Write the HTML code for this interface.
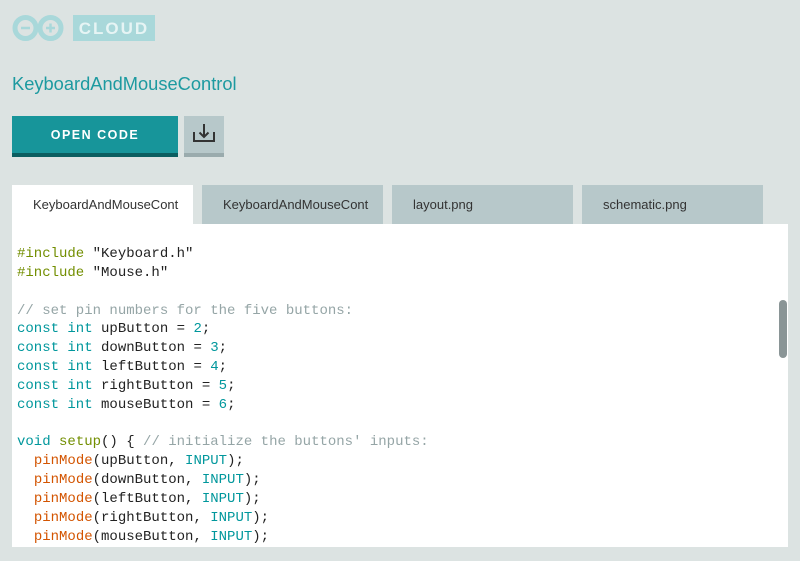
<!DOCTYPE html>
<html><head><style>
body{margin:0;width:800px;height:561px;background:#dce3e2;font-family:"Liberation Sans",sans-serif;position:relative;overflow:hidden}
.abs{position:absolute}
.tab{position:absolute;top:185px;height:39px;width:181px;background:#b7c8ca;font-size:13px;color:#333;line-height:40px;box-sizing:border-box;padding-left:21px;white-space:nowrap;overflow:hidden}
pre{margin:0;font-family:"Liberation Mono",monospace;font-size:14px;line-height:18.85px;color:#222}
.k{color:#00979c}.g{color:#728e00}.o{color:#d35400}.c{color:#95a5a6}
</style></head><body>
<svg class="abs" style="left:12px;top:14px" width="52" height="28" viewBox="0 0 52 28">
<g fill="none" stroke="#a9d8da" stroke-width="5"><circle cx="13.5" cy="14" r="10.5"/><circle cx="38.5" cy="14" r="10.5"/></g>
<g stroke="#a9d8da" stroke-width="2.5"><line x1="9" y1="14" x2="18" y2="14"/><line x1="34" y1="14" x2="43" y2="14"/><line x1="38.5" y1="9.5" x2="38.5" y2="18.5"/></g>
</svg>
<div class="abs" style="left:73px;top:15px;width:82px;height:26px;background:#a9d8da;color:#e6f4f4;font-weight:bold;font-size:17px;letter-spacing:2px;line-height:27px;text-align:center">CLOUD</div>
<div class="abs" style="left:12px;top:73px;font-size:18.3px;color:#1d9aa0">KeyboardAndMouseControl</div>
<div class="abs" style="left:12px;top:116px;width:166px;height:37px;background:#17959a;border-bottom:4px solid #0b5e60;color:#fff;font-size:12.5px;font-weight:bold;letter-spacing:1.5px;text-align:center;line-height:38px">OPEN CODE</div>
<div class="abs" style="left:184px;top:116px;width:40px;height:37px;background:#b7c8ca;border-bottom:4px solid #9aabad">
<svg width="40" height="37" viewBox="0 0 40 37"><g fill="none" stroke="#333" stroke-width="2"><path d="M10 16v9h20v-9"/><path d="M20 8v13M15.5 16.5l4.5 4.5 4.5-4.5"/></g></svg></div>
<div class="tab" style="left:12px;background:#fff">KeyboardAndMouseCont</div>
<div class="tab" style="left:202px">KeyboardAndMouseCont</div>
<div class="tab" style="left:392px">layout.png</div>
<div class="tab" style="left:582px">schematic.png</div>
<div class="abs" style="left:12px;top:224px;width:776px;height:323px;background:#fff;overflow:hidden">
<pre style="position:absolute;left:5px;top:21px"><span class="g">#include</span> "Keyboard.h"
<span class="g">#include</span> "Mouse.h"

<span class="c">// set pin numbers for the five buttons:</span>
<span class="k">const int</span> upButton = <span class="k">2</span>;
<span class="k">const int</span> downButton = <span class="k">3</span>;
<span class="k">const int</span> leftButton = <span class="k">4</span>;
<span class="k">const int</span> rightButton = <span class="k">5</span>;
<span class="k">const int</span> mouseButton = <span class="k">6</span>;

<span class="k">void</span> <span class="g">setup</span>() { <span class="c">// initialize the buttons' inputs:</span>
  <span class="o">pinMode</span>(upButton, <span class="k">INPUT</span>);
  <span class="o">pinMode</span>(downButton, <span class="k">INPUT</span>);
  <span class="o">pinMode</span>(leftButton, <span class="k">INPUT</span>);
  <span class="o">pinMode</span>(rightButton, <span class="k">INPUT</span>);
  <span class="o">pinMode</span>(mouseButton, <span class="k">INPUT</span>);</pre>
<div class="abs" style="left:767px;top:76px;width:8px;height:58px;border-radius:4px;background:#8a9596"></div>
</div>
</body></html>
